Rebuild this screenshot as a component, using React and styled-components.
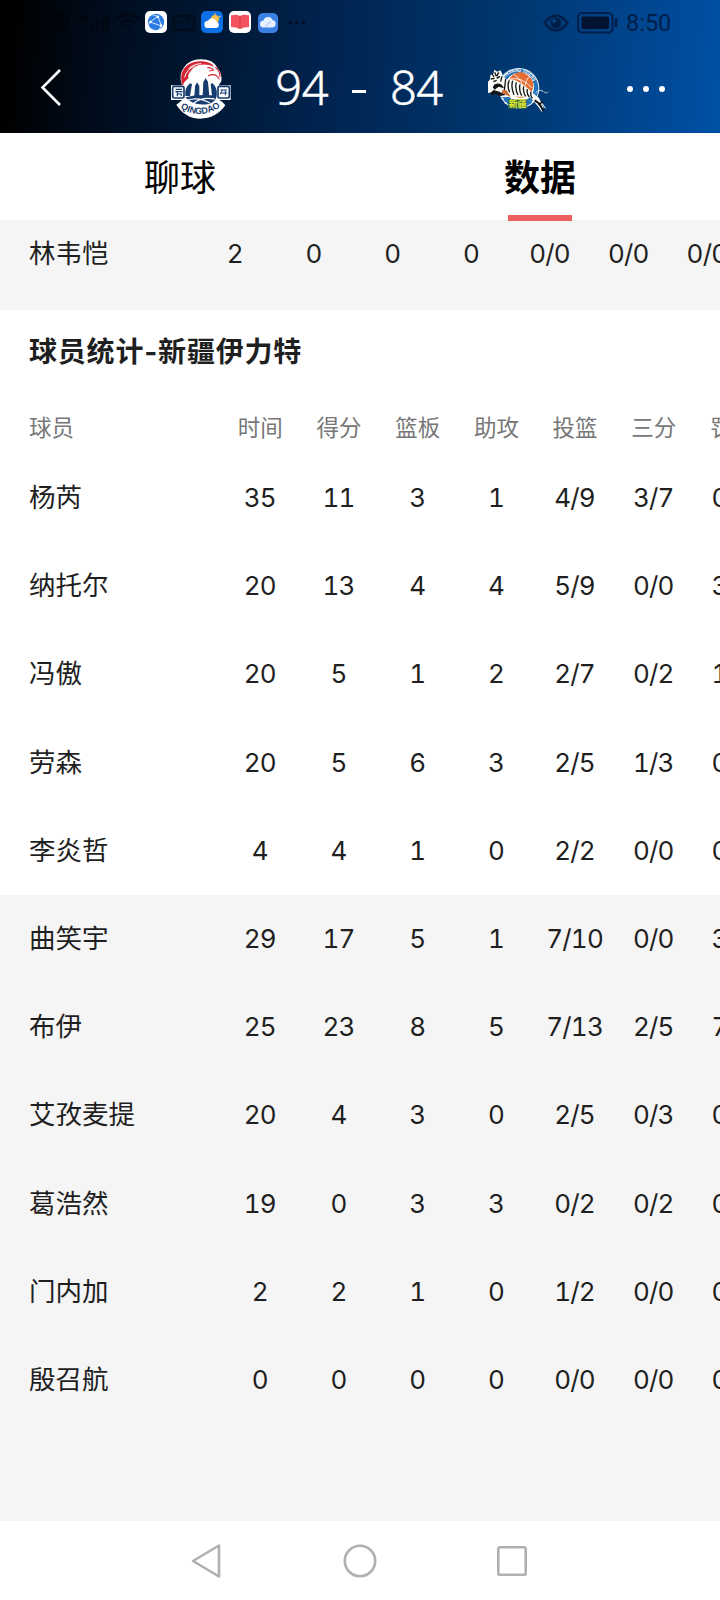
import React from "react";
import styled, { createGlobalStyle } from "styled-components";

const bench = [
    { name: "林韦恺", stats: ["2", "0", "0", "0", "0/0", "0/0", "0/0"] },
];

const columns = ["时间", "得分", "篮板", "助攻", "投篮", "三分", "罚球"];

const starters = [
    { name: "杨芮", stats: ["35", "11", "3", "1", "4/9", "3/7", "0/0"] },
    { name: "纳托尔", stats: ["20", "13", "4", "4", "5/9", "0/0", "3/4"] },
    { name: "冯傲", stats: ["20", "5", "1", "2", "2/7", "0/2", "1/2"] },
    { name: "劳森", stats: ["20", "5", "6", "3", "2/5", "1/3", "0/0"] },
    { name: "李炎哲", stats: ["4", "4", "1", "0", "2/2", "0/0", "0/0"] },
];

const substitutes = [
    { name: "曲笑宇", stats: ["29", "17", "5", "1", "7/10", "0/0", "3/3"] },
    { name: "布伊", stats: ["25", "23", "8", "5", "7/13", "2/5", "7/8"] },
    { name: "艾孜麦提", stats: ["20", "4", "3", "0", "2/5", "0/3", "0/0"] },
    { name: "葛浩然", stats: ["19", "0", "3", "3", "0/2", "0/2", "0/0"] },
    { name: "门内加", stats: ["2", "2", "1", "0", "1/2", "0/0", "0/0"] },
    { name: "殷召航", stats: ["0", "0", "0", "0", "0/0", "0/0", "0/0"] },
];

const StatusLeft = () => (
    <svg width="320" height="45" viewBox="0 0 320 45" fill="none">
        <g stroke="#000" strokeOpacity="0.4" strokeWidth="2.4">
            <rect x="51" y="15" width="16" height="16" rx="3" />
            <path d="M55 20h8M55 26h8M59 19v8" />
            <path d="M81 15v7M86 15v7M81 18h5" strokeWidth="1.6" />
            <path d="M93 31v-6M98 31v-10M103 31v-13M107 31v-16" strokeWidth="3" />
            <path d="M117 18q11-8 22 0M121 23q7-5 14 0M125 27q3-2 6 0" strokeWidth="2.8" />
            <rect x="174" y="16" width="20" height="14" rx="2" />
            <path d="M179 19v5M183 19v5M179 22h4M187 19v5h3v-5z" strokeWidth="1.4" />
        </g>

        <rect x="145" y="11" width="22" height="22" rx="5" fill="#fff" />
        <circle cx="156" cy="22" r="8.2" fill="#2b7be0" />
        <path d="M150 22l8-5.5 3.5 9.5zM158 16.5l-6-2M150 22l-2 3M161.5 26l-3 4" stroke="#cfe4ff" strokeWidth="1" />
        <circle cx="150.5" cy="22" r="1.2" fill="#fff" />
        <circle cx="158" cy="16.8" r="1.2" fill="#fff" />
        <circle cx="161" cy="25.5" r="1.2" fill="#fff" />

        <rect x="201" y="11" width="22" height="22" rx="5" fill="#0b6fe6" />
        <circle cx="215" cy="19" r="4" fill="#f3bf4a" />
        <path d="M215 13v2M220.5 16l-2 1.5" stroke="#f3bf4a" strokeWidth="1.2" />
        <path d="M208 28a3.6 3.6 0 0 1 0-7.2 4.6 4.6 0 0 1 8.5 1 3.2 3.2 0 0 1 0 6.2z" fill="#fff" />

        <rect x="229" y="11" width="22" height="22" rx="5" fill="#fff" />
        <path d="M231 15.5q5-1.5 9 .5 4-2 9-.5v11.500q-5 0-9 2-4-2-9-2z" fill="#f4525c" />
        <path d="M240 16v12.5" stroke="#cf3a46" strokeWidth="1" />

        <rect x="258" y="13" width="20" height="20" rx="5" fill="#3c80e4" />
        <path d="M263.5 27.5a3.5 3.5 0 0 1 0-7 4.8 4.8 0 0 1 9-.5 3.8 3.8 0 0 1 0 7.5z" fill="#e6f0ff" />
        <path d="M266 27q1-4 5-5" stroke="#a9c8f5" strokeWidth="1.2" />

        <g fill="#000" fillOpacity="0.5">
            <circle cx="290.5" cy="22.5" r="1.8" />
            <circle cx="297" cy="22.5" r="1.8" />
            <circle cx="303.5" cy="22.5" r="1.8" />
        </g>
    </svg>
);

const StatusRight = () => (
    <svg width="76" height="24" viewBox="0 0 76 24" fill="none">
        <path d="M1.5 12Q13-3 24.5 12 13 27 1.5 12z" stroke="#021f4a" strokeWidth="2.6" />
        <circle cx="13" cy="12" r="5.4" fill="#021f4a" />
        <circle cx="11" cy="10" r="1.8" fill="#0a478c" />
        <rect x="35" y="2" width="34.5" height="19.5" rx="4" stroke="#021f4a" strokeWidth="2" />
        <rect x="38.5" y="5.5" width="27.5" height="12.5" rx="1.5" fill="#001431" />
        <path d="M73 7v9" stroke="#021f4a" strokeWidth="2.6" />
    </svg>
);

const QingdaoLogo = () => (
    <svg width="64" height="64" viewBox="60 35 192 192">
        <path d="M96 120Q84 88 103 65q18-24 50-23 36 0 49 25 15 17 12 41l-8 12h36v44h-34q12 6 18 16-28 40-76 40-45-1-71-42l18-14H63v-44h33z" fill="#fff" />
        <path d="M98 122Q86 90 104 67q20-23 54-19 26 3 34 16-20-9-44-5-16 4-24 16-12 12-9 24-12 8-17 23z" fill="#d42535" />
        <path d="M104 96q6-24 30-34M116 70q14-14 38-15" fill="none" stroke="#fff" strokeWidth="3" />
        <path d="M172 67q13-1 19 7l-13 3M174 92q16-8 26 0 6 4 8 10M196 66q14 10 14 28" fill="none" stroke="#d42535" strokeWidth="3.5" />
        <rect x="68" y="123" width="34" height="35" rx="5" fill="#fff" stroke="#173c70" strokeWidth="5" />
        <rect x="204" y="123" width="34" height="35" rx="5" fill="#fff" stroke="#173c70" strokeWidth="5" />
        <path d="M77 132h19M76 139h22M82 139v14M82 146h12v7" fill="none" stroke="#173c70" strokeWidth="3.5" />
        <path d="M211 134h20M212 143h20M217 134l-6 12M226 134v16" fill="none" stroke="#173c70" strokeWidth="3" />
        <path d="M106 152q-4-22 14-38l6 2-6 36zM200 152q4-22-12-38l-6 1 4 37z" fill="#173c70" />
        <path d="M133 154l2-32 6-11 7 11v32zM158 152l2-42 7-12 7 12 4 42z" fill="#173c70" />
        <path d="M106 156q44-11 94-4-3 18-24 24-44 8-70-20z" fill="#173c70" />
        <path d="M110 165q35-12 70 8M128 176q25-22 66-15" fill="none" stroke="#fff" strokeWidth="4" />
        <path id="qingdao-arc" d="M84 183q68 48 134-4" fill="none" />
        <text fill="#173c70" fontFamily="Liberation Sans" fontWeight="700" fontSize="27" textAnchor="middle">
            <textPath href="#qingdao-arc" startOffset="50%" textLength="128" lengthAdjust="spacingAndGlyphs">QINGDAO</textPath>
        </text>
    </svg>
);

const XinjiangLogo = () => (
    <svg width="64" height="54" viewBox="50 45 192 162">
        <circle cx="143" cy="124" r="61" fill="#e8f3fb" />
        <circle cx="143" cy="124" r="58" fill="#2273b8" />
        <circle cx="145" cy="120" r="43" fill="#fff" />
        <circle cx="148" cy="114" r="38" fill="#e56d32" />
        <path d="M116 96q35-8 66 27M128 82q27 16 34 60M176 87q-17 14-17 50" fill="none" stroke="#fff" strokeWidth="2.5" />
        <path id="xinjiang-arc" d="M98 94a52 52 0 0 1 92 26" fill="none" />
        <text fill="#fff" fontFamily="Liberation Sans" fontWeight="700" fontSize="15">
            <textPath href="#xinjiang-arc" textLength="104" lengthAdjust="spacingAndGlyphs">XINJIANG TIGERS</textPath>
        </text>
        <path d="M55 99l3-16 8-3 3-12 9 6 9-4 5 9 3 11 14 8q24-4 42 14 20 10 34 27l18 14 14 30-8 6-12-14-20-24-20-2-40 0-24 2-15-9-15-6-22 3-4-8 12-11-6-9z" fill="#fbfbf8" />
        <path d="M62 80l6 10M70 76l5 12M82 76l-6 12M58 96l12-2M86 88l-10 6M66 104l10-4M92 88l-4 16M103 96l-4 34M114 100q-8 16 1 36M124 101q-6 20 4 42M135 106q-5 18 5 38M146 112q-4 18 5 34M157 118q-3 16 6 30M168 126q-3 14 6 24M179 134q-3 10 4 20" fill="none" stroke="#151515" strokeWidth="4" />
        <path d="M70 112q20-8 28 12l-16-5-12 9-6-7z" fill="#111" />
        <path d="M92 130l14 0 12 20-14-7-12-5z" fill="#d06a34" />
        <path d="M57 138l10-9 17 5 20 10-18 3-14-6-9 4z" fill="#151515" />
        <path d="M190 160l14 10 12 22M200 172l16-6" stroke="#111" strokeWidth="6" fill="none" />
        <path d="M204 180l8 14M211 168l12 16" stroke="#fff" strokeWidth="3" />
        <path d="M192 139q11-14 25-5 8 7 14 0" stroke="#fff" strokeWidth="3" strokeDasharray="5 2" fill="none" />
        <circle cx="94" cy="156" r="3" fill="#fff" />
        <circle cx="103" cy="168" r="3" fill="#fff" />
        <circle cx="184" cy="164" r="3" fill="#fff" />
        <rect x="111" y="157" width="55" height="28" fill="#2c6a4a" />
        <text x="112" y="181" fill="#f3ee2e" fontFamily="Noto Sans CJK SC" fontWeight="700" fontSize="26" textLength="53" lengthAdjust="spacingAndGlyphs">新疆</text>
    </svg>
);

const StatRow = ({ player, offset }) => (
    <Row>
        <PlayerName $offset={offset}>{player.name}</PlayerName>
        {player.stats.map((value, index) => (
            <StatCell key={index}>{value}</StatCell>
        ))}
    </Row>
);

const App = () => {
    return (
        <Page>
            <GlobalStyle />
            <Header>
                <StatusBar>
                    <StatusLeft />
                    <StatusInfo>
                        <StatusRight />
                        <Clock>8:50</Clock>
                    </StatusInfo>
                </StatusBar>
                <ScoreBar>
                    <BackButton>
                        <svg width="24" height="40" viewBox="0 0 24 40" fill="none">
                            <path d="M21 2L3.5 19.5 21 37" stroke="#fff" strokeWidth="2.6" />
                        </svg>
                    </BackButton>
                    <QingdaoLogo />
                    <Score>
                        <span>94</span>
                        <Dash />
                        <span>84</span>
                    </Score>
                    <XinjiangLogo />
                    <MoreButton>
                        <Dot />
                        <Dot />
                        <Dot />
                    </MoreButton>
                </ScoreBar>
            </Header>
            <Tabs>
                <Tab>聊球</Tab>
                <Tab $active>数据</Tab>
            </Tabs>
            <PreviousTeam>
                {bench.map((player) => (
                    <StatRow key={player.name} player={player} offset={195.5} />
                ))}
            </PreviousTeam>
            <TeamTitle>球员统计-新疆伊力特</TeamTitle>
            <ColumnHeader>
                <ColumnPlayer>球员</ColumnPlayer>
                {columns.map((column) => (
                    <ColumnLabel key={column}>{column}</ColumnLabel>
                ))}
            </ColumnHeader>
            <Starters>
                {starters.map((player) => (
                    <StatRow key={player.name} player={player} offset={220.5} />
                ))}
            </Starters>
            <Substitutes>
                {substitutes.map((player) => (
                    <StatRow key={player.name} player={player} offset={220.5} />
                ))}
            </Substitutes>
            <NavBar>
                <svg width="32" height="36" viewBox="0 0 32 36" fill="none">
                    <path d="M28 2.5v31L2 18z" stroke="#b0b0b0" strokeWidth="2.6" strokeLinejoin="round" />
                </svg>
                <svg width="36" height="36" viewBox="0 0 36 36" fill="none">
                    <circle cx="18" cy="18" r="15.2" stroke="#b0b0b0" strokeWidth="2.6" />
                </svg>
                <svg width="32" height="36" viewBox="0 0 32 36" fill="none">
                    <rect x="1.3" y="4.3" width="27.4" height="27.4" rx="1.5" stroke="#b0b0b0" strokeWidth="2.6" />
                </svg>
            </NavBar>
        </Page>
    );
};

const GlobalStyle = createGlobalStyle`
    * {
        box-sizing: border-box;
    }

    body {
        margin: 0;
        background-color: #fff;
    }

    svg {
        display: block;
        flex-shrink: 0;
    }
`

const Page = styled.div`
    width: 720px;
    height: 1600px;
    display: flex;
    flex-direction: column;
    overflow: hidden;
    background-color: #fff;
    color: #1f1f1f;
    font-family: Inter, "Noto Sans CJK SC", sans-serif;
`

const Header = styled.div`
    height: 133px;
    flex-shrink: 0;
    background: linear-gradient(95deg, #000 2%, #000c1c 14%, #00152f 26%, #002450 46%, #003872 72%, #0050a6 100%);
`

const StatusBar = styled.div`
    height: 45px;
    display: flex;
    justify-content: space-between;
    padding-right: 49px;
`

const StatusInfo = styled.div`
    display: flex;
    align-items: center;
    gap: 7px;
    padding-top: 1px;
`

const Clock = styled.span`
    width: 45px;
    color: #021f4a;
    font-family: Roboto, sans-serif;
    font-size: 23.5px;
    line-height: 30px;
    white-space: nowrap;
`

const ScoreBar = styled.div`
    height: 88px;
    display: grid;
    grid-template-columns: 170px 64px 254px 64px 1fr;
    align-items: center;
`

const BackButton = styled.div`
    padding-left: 39px;
    padding-bottom: 3px;
`

const Score = styled.div`
    display: flex;
    align-items: center;
    justify-content: center;
    gap: 24px;
    padding-right: 4px;
    padding-bottom: 4px;
    color: #fff;
    font-family: "Noto Sans", sans-serif;
    font-weight: 300;
    font-size: 47px;
    line-height: 60px;
    letter-spacing: -0.5px;
    -webkit-text-stroke: 0.5px #fff;
`

const Dash = styled.div`
    width: 14px;
    height: 3px;
    margin-top: 8px;
    background-color: #fff;
`

const MoreButton = styled.div`
    display: flex;
    justify-content: flex-end;
    gap: 10px;
    padding-right: 55px;
`

const Dot = styled.div`
    width: 6px;
    height: 6px;
    border-radius: 50%;
    background-color: #fff;
`

const Tabs = styled.div`
    height: 87px;
    flex-shrink: 0;
    display: flex;
`

const Tab = styled.div`
    flex: 1;
    position: relative;
    text-align: center;
    color: #000;
    font-family: "Noto Sans CJK SC", sans-serif;
    font-size: 36px;
    line-height: 85px;
    font-weight: ${(p) => (p.$active ? 700 : 400)};

    &::after {
        content: "";
        display: ${(p) => (p.$active ? "block" : "none")};
        position: absolute;
        left: 148px;
        bottom: -1px;
        width: 64px;
        height: 6px;
        background-color: #ee5f60;
    }
`

const PreviousTeam = styled.div`
    height: 90px;
    flex-shrink: 0;
    padding-top: 2px;
    background-color: #f5f5f5;

    > div {
        height: 64px;
    }
`

const TeamTitle = styled.div`
    height: 82px;
    flex-shrink: 0;
    padding-left: 29px;
    font-size: 28px;
    font-weight: 700;
    line-height: 84px;
    letter-spacing: 0.8px;
`

const Row = styled.div`
    display: flex;
    align-items: center;
    height: 88.2px;
`

const PlayerName = styled.div`
    width: ${(p) => p.$offset}px;
    flex-shrink: 0;
    padding-left: 29px;
    font-family: "Noto Sans CJK SC", sans-serif;
    font-size: 26.5px;
    line-height: 40px;
    padding-bottom: 4px;
`

const StatCell = styled.div`
    width: 78.7px;
    flex-shrink: 0;
    text-align: center;
    font-size: 26px;
    font-variant-numeric: tabular-nums;
    line-height: 40px;
    letter-spacing: -0.8px;
    white-space: nowrap;
`

const ColumnHeader = styled.div`
    height: 62px;
    flex-shrink: 0;
    display: flex;
    align-items: center;
    padding-top: 5px;
    color: #777;
    font-family: "Noto Sans CJK SC", sans-serif;
    font-size: 22.5px;
    line-height: 32px;
`

const ColumnPlayer = styled.div`
    width: 221px;
    flex-shrink: 0;
    padding-left: 29px;
`

const ColumnLabel = styled.div`
    width: 78.7px;
    flex-shrink: 0;
    text-align: center;
`

const Starters = styled.div`
    height: 441px;
    flex-shrink: 0;
`

const Substitutes = styled.div`
    height: 626px;
    flex-shrink: 0;
    background-color: #f5f5f5;
`

const NavBar = styled.div`
    flex: 1;
    display: flex;
    align-items: center;
    justify-content: center;
    gap: 119px;
`

export default App;
